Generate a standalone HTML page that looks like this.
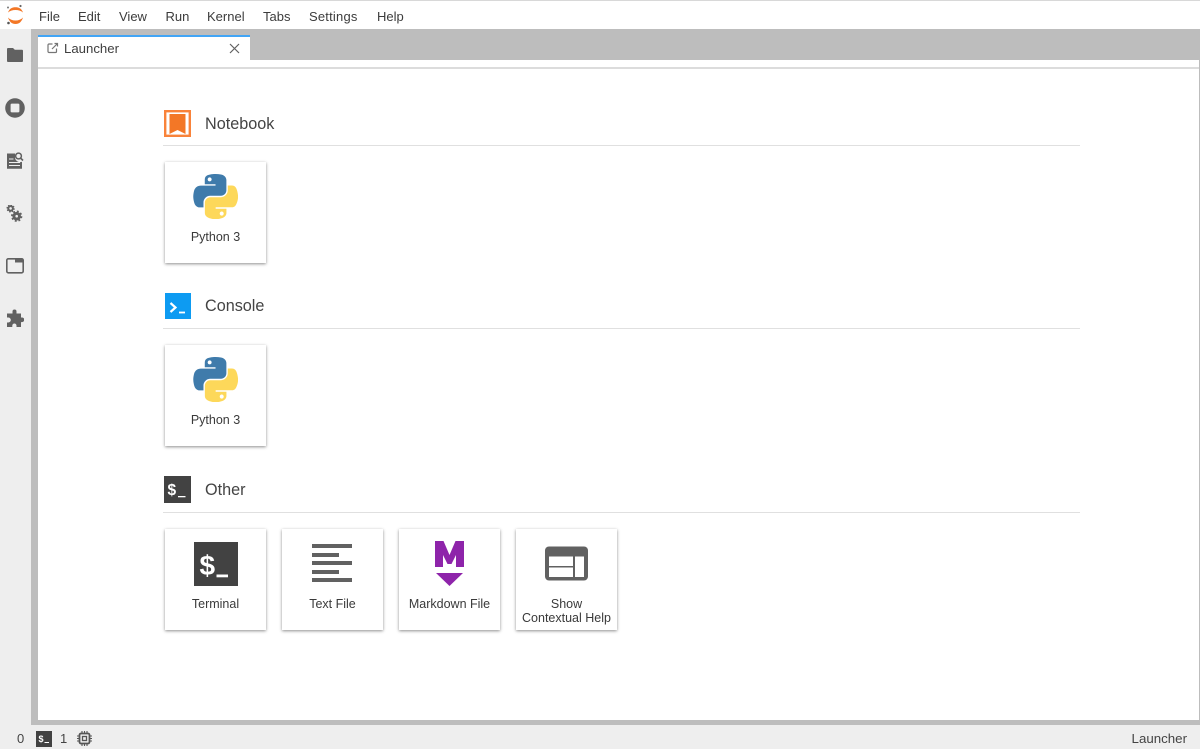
<!DOCTYPE html>
<html><head><meta charset="utf-8">
<style>
html,body{margin:0;padding:0;width:1200px;height:749px;overflow:hidden;background:#fff;font-family:"Liberation Sans",sans-serif;color:#333}
#w{position:absolute;left:0;top:0;width:1200px;height:749px;overflow:hidden;filter:blur(.35px)}
.a{position:absolute}
.menu{position:absolute;top:9px;font-size:13px;line-height:15px;color:#3c3c3c;white-space:nowrap}
.card{position:absolute;width:101px;height:101px;background:#fff;box-shadow:0 1px 3px rgba(0,0,0,.45);}
.lbl{position:absolute;left:-5px;right:-5px;text-align:center;font-size:12.5px;line-height:14px;color:#3a3a3a;top:68px}
.h{position:absolute;left:205px;font-size:16.2px;line-height:20px;color:#444}
.hr{position:absolute;left:163px;width:917px;height:1px;background:#e0e0e0}
</style></head><body><div id="w">
<svg width="0" height="0" style="position:absolute"><defs>
<symbol id="py3" viewBox="0 0 110 110">
<path fill="#3f7bab" d="M54.9 0C50.3 0 45.9.4 42.1 1.1 30.8 3.1 28.8 7.2 28.8 14.9V25h26.3v3.4H19C11.300 28.400 4.600 33 2.500 41.700c-2.400 10-2.500 16.200 0 26.600 1.900 7.800 6.300 13.300 14 13.300h9.100v-12c0-8.700 7.500-16.400 16.500-16.400h26.300c7.300 0 13.200-6 13.200-13.400V14.900c0-7.100-6-12.500-13.200-13.700C64.200.4 59.500 0 54.900 0zM40.700 8.100c2.700 0 4.900 2.300 4.900 5 0 2.800-2.200 5-4.900 5-2.700 0-4.900-2.200-4.900-5 0-2.800 2.200-5 4.900-5z"/>
<path fill="#fdd85a" d="M85 28.400v11.700c0 9-7.700 16.600-16.500 16.600H42.200c-7.200 0-13.200 6.200-13.200 13.400v25.100c0 7.100 6.200 11.300 13.200 13.400 8.300 2.400 16.300 2.900 26.300 0 6.600-1.900 13.200-5.800 13.200-13.400V84.800H55.400v-3.400h39.500c7.700 0 10.500-5.300 13.200-13.300 2.800-8.200 2.700-16.100 0-26.600-1.900-7.600-5.500-13.300-13.200-13.300H85zM70.200 91.800c2.700 0 4.900 2.200 4.900 5 0 2.800-2.200 5-4.900 5-2.700 0-4.900-2.300-4.900-5 0-2.800 2.200-5 4.900-5z"/>
</symbol></defs></svg>

<!-- top bar -->
<div class="a" style="left:0;top:0;width:1200px;height:1px;background:#d8d8d8"></div>
<svg class="a" style="left:5px;top:4px" width="20" height="22" viewBox="0 0 20 22">
<path d="M3 8.500C4.500 4.500 7 3.300 10.500 3.300S16.500 4.500 18 8.500C16 6.800 13.500 6 10.500 6S5 6.800 3 8.500z" fill="#f37726"/>
<path d="M3 13.500C4.500 18 7 20 10.500 20s6-2 7.500-6.500C16 15.500 13.500 16.500 10.500 16.500S5 15.500 3 13.500z" fill="#f37726"/>
<circle cx="15.500" cy="2" r="1.100" fill="#666"/><circle cx="3" cy="3.500" r="1" fill="#777"/><circle cx="3.500" cy="19" r="1.300" fill="#555"/>
</svg>
<div class="menu" style="left:39px">File</div>
<div class="menu" style="left:78px">Edit</div>
<div class="menu" style="left:119px">View</div>
<div class="menu" style="left:165.500px">Run</div>
<div class="menu" style="left:207px">Kernel</div>
<div class="menu" style="left:263px">Tabs</div>
<div class="menu" style="left:309px;letter-spacing:.2px">Settings</div>
<div class="menu" style="left:377px">Help</div>

<!-- frame -->
<div class="a" style="left:0;top:29px;width:31px;height:696px;background:#eee"></div>
<div class="a" style="left:31px;top:29px;width:1169px;height:696px;background:#bdbdbd"></div>
<div class="a" style="left:38px;top:60px;width:1161px;height:660px;background:#fff"></div>
<div class="a" style="left:38px;top:67px;width:1161px;height:2px;background:#dcdcdc"></div>
<!-- tab -->
<div class="a" style="left:38px;top:35px;width:212px;height:32px;background:#fff"></div>
<div class="a" style="left:38px;top:35px;width:212px;height:2px;background:#42a5f5"></div>
<svg class="a" style="left:47px;top:42px" width="12" height="12" viewBox="0 0 12 12" fill="none" stroke="#757575" stroke-width="1.200">
<path d="M9.500 6.500v3a1 1 0 0 1-1 1H2a1 1 0 0 1-1-1V3a1 1 0 0 1 1-1h3.500"/><path d="M5 7l5.500-5.500M7.500 1.500h3v3"/></svg>
<div class="a" style="left:64px;top:40.500px;font-size:13.2px;line-height:16px;color:#3f3f3f">Launcher</div>
<svg class="a" style="left:229px;top:43px" width="11" height="11" viewBox="0 0 11 11" stroke="#616161" stroke-width="1.200"><path d="M1 1l9 9M10 1l-9 9"/></svg>

<!-- sidebar icons -->
<svg class="a" style="left:6px;top:46px" width="18" height="18" viewBox="0 0 18 18"><path fill="#616161" d="M1 3a1 1 0 0 1 1-1h5l1.800 1.800H16a1 1 0 0 1 1 1V15a1 1 0 0 1-1 1H2a1 1 0 0 1-1-1z"/></svg>
<svg class="a" style="left:5px;top:98px" width="20" height="20" viewBox="0 0 20 20"><circle cx="10" cy="10" r="9.800" fill="#616161"/><rect x="5.600" y="5.600" width="8.800" height="8.800" rx="1.200" fill="#eee"/></svg>
<svg class="a" style="left:6px;top:152px" width="18" height="18" viewBox="0 0 18 18">
<path fill="#616161" d="M1 1.500h8v3a5 5 0 0 0 7 5.200v7H1z"/><path stroke="#eee" stroke-width="1.100" d="M3 7h4.500M3 10.500h11M3 13.500h11"/>
<circle cx="12.500" cy="4" r="2.900" fill="none" stroke="#616161" stroke-width="1.500"/><path d="M14.500 6l2.500 2.500" stroke="#616161" stroke-width="1.600"/></svg>
<svg class="a" style="left:6px;top:205px" width="18" height="18" viewBox="0 0 18 18">
<g fill="none" stroke="#616161"><circle cx="4.600" cy="3.400" r="2.300" stroke-width="2"/><circle cx="4.600" cy="3.400" r="3.500" stroke-width="1.300" stroke-dasharray="1.400 1.350"/>
<circle cx="10.700" cy="11.200" r="2.800" stroke-width="3"/><circle cx="10.700" cy="11.200" r="4.800" stroke-width="1.700" stroke-dasharray="1.900 1.870"/></g></svg>
<svg class="a" style="left:6px;top:258px" width="18" height="16" viewBox="0 0 18 16"><rect x=".8" y=".8" width="16.400" height="14" rx="1.500" fill="none" stroke="#616161" stroke-width="1.600"/><rect x="9" y=".8" width="8.200" height="3.700" fill="#616161"/></svg>
<svg class="a" style="left:6px;top:309px" width="18" height="19" viewBox="0 0 18 19"><path fill="#616161" d="M6.500 2.500a2 2 0 0 1 4 0V4.500h4.500V8.500h1a2.300 2.300 0 0 1 0 4.600h-1V18h-4.500v-1.400a2.100 2.100 0 0 0-4.200 0V18H1v-4.500h1.300a2.500 2.500 0 0 0 0-5H1V4.500h5.500z"/></svg>

<!-- Notebook -->
<svg class="a" style="left:164px;top:110px" width="27" height="27" viewBox="0 0 27 27"><rect x="1.200" y="1.200" width="24.600" height="24.600" fill="#fff" stroke="#f9833a" stroke-width="2.400"/><path fill="#f37726" d="M5.500 4h16v20l-8-4-8 4z"/></svg>
<div class="h" style="top:114px">Notebook</div>
<div class="hr" style="top:145px"></div>
<div class="card" style="left:165px;top:162px"><svg class="a" style="left:27.500px;top:11.500px" width="45" height="45"><use href="#py3"/></svg><div class="lbl">Python 3</div></div>

<!-- Console -->
<div class="a" style="left:165px;top:293px;width:26px;height:26px;background:#0d9bf2"></div>
<svg class="a" style="left:165px;top:293px" width="26" height="26" viewBox="0 0 26 26"><path d="M5.500 10l5 4.500-5 4.500" fill="none" stroke="#fff" stroke-width="2.200"/><path d="M14 19.500h6" stroke="#fff" stroke-width="1.800"/></svg>
<div class="h" style="top:296px">Console</div>
<div class="hr" style="top:328px"></div>
<div class="card" style="left:165px;top:345px"><svg class="a" style="left:27.500px;top:11.500px" width="45" height="45"><use href="#py3"/></svg><div class="lbl">Python 3</div></div>

<!-- Other -->
<svg class="a" style="left:164px;top:476px" width="27" height="27" viewBox="0 0 27 27"><rect width="27" height="27" fill="#424242"/><text x="3.500" y="19" font-family="Liberation Sans" font-weight="bold" font-size="15.500" fill="#fff">$</text><rect x="14" y="20" width="7.500" height="1.300" fill="#fff"/></svg>
<div class="h" style="top:480px">Other</div>
<div class="hr" style="top:512px"></div>

<div class="card" style="left:165px;top:529px">
<svg class="a" style="left:28.500px;top:12.500px" width="44" height="44" viewBox="0 0 44 44"><rect width="44" height="44" fill="#424242"/><text x="5.500" y="33" font-family="Liberation Sans" font-weight="bold" font-size="28" fill="#fff">$</text><rect x="22.500" y="32.500" width="11.500" height="2.800" fill="#fff"/></svg>
<div class="lbl">Terminal</div></div>

<div class="card" style="left:282px;top:529px">
<svg class="a" style="left:30px;top:13px" width="41" height="42" viewBox="0 0 41 42" fill="#616161"><rect y="2" width="40" height="4"/><rect y="11" width="27" height="4"/><rect y="19" width="40" height="4"/><rect y="28" width="27" height="4"/><rect y="36" width="40" height="4"/></svg>
<div class="lbl">Text File</div></div>

<div class="card" style="left:399px;top:529px">
<svg class="a" style="left:35px;top:11px" width="32" height="48" viewBox="0 0 32 48" fill="#8e24aa"><path d="M1 1h8.500l6 14 6-14H30v26h-8V15l-4.500 9h-4L9 15v12H1z"/><path d="M2 33h27L15.500 46z"/></svg>
<div class="lbl">Markdown File</div></div>

<div class="card" style="left:516px;top:529px">
<svg class="a" style="left:28px;top:16px" width="46" height="37" viewBox="0 0 46 37"><rect x="1" y="1.500" width="43" height="34" rx="4" fill="#616161"/><rect x="5" y="11.500" width="24" height="9.500" fill="#fff"/><rect x="5" y="22.500" width="24" height="9.500" fill="#fff"/><rect x="31" y="11.500" width="9" height="20.500" fill="#fff"/></svg>
<div class="lbl">Show<br>Contextual Help</div></div>

<!-- status bar -->
<div class="a" style="left:0;top:725px;width:1200px;height:24px;background:#eee"></div>
<div class="a" style="left:17px;top:731px;font-size:13px;line-height:15px;color:#444">0</div>
<svg class="a" style="left:36px;top:731px" width="16" height="16" viewBox="0 0 16 16"><rect width="16" height="16" fill="#424242"/><text x="2.500" y="11" font-family="Liberation Sans" font-weight="bold" font-size="9" fill="#fff">$</text><rect x="8.500" y="11" width="4.500" height="1" fill="#fff"/></svg>
<div class="a" style="left:60px;top:731px;font-size:13px;line-height:15px;color:#444">1</div>
<svg class="a" style="left:77px;top:731px" width="15" height="15" viewBox="0 0 15 15" fill="none" stroke="#555"><rect x="2.500" y="2.500" width="10" height="10" rx="1.500" stroke-width="1.800"/><rect x="5.500" y="5.500" width="4" height="4" stroke-width="1.300"/><path d="M5 0v2M7.500 0v2M10 0v2M5 13v2M7.500 13v2M10 13v2M0 5h2M0 7.500h2M0 10h2M13 5h2M13 7.500h2M13 10h2" stroke-width="1.100"/></svg>
<div class="a" style="right:13px;top:731px;font-size:13.300px;line-height:15px;color:#444">Launcher</div>
</div></body></html>
